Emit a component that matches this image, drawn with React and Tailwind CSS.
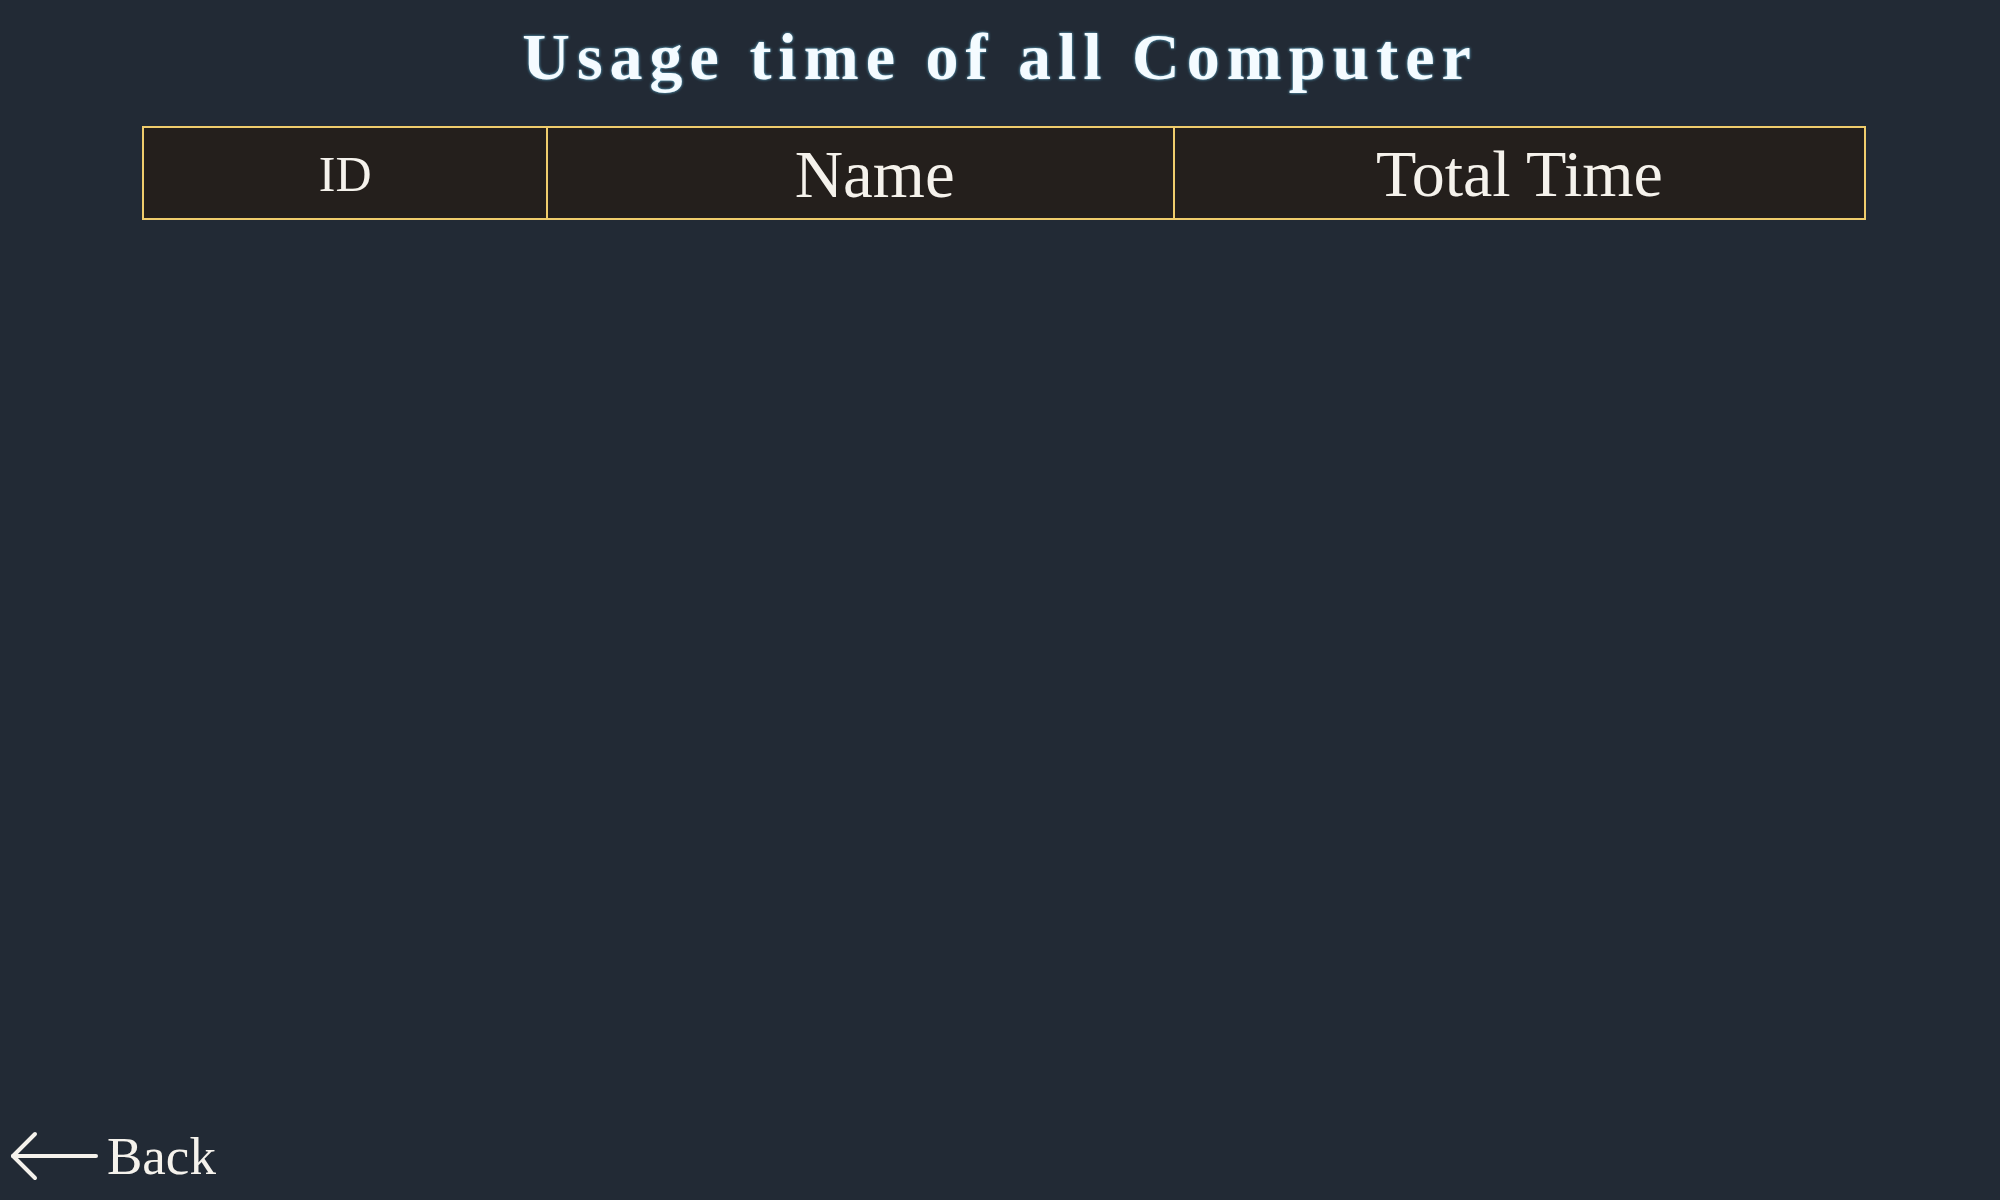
import React from 'react';

const columns = [
  { label: 'ID', width: 'w-[405px]', size: 'text-[50px]', pad: '' },
  { label: 'Name', width: 'w-[627px]', size: 'text-[67px]', pad: 'pl-[28px]' },
  { label: 'Total Time', width: 'w-[692px]', size: 'text-[66px]', pad: '' },
];

const BackArrow = () => (
  <svg width="90" height="50" viewBox="0 0 90 50" fill="none" stroke="#f5f2ec" strokeWidth="4" strokeLinecap="round" strokeLinejoin="round">
    <line x1="5" y1="25" x2="88" y2="25" />
    <polyline points="27,3 5,25 27,47" />
  </svg>
);

const App = () => {
  return (
    <div className="h-screen bg-[#222a35] flex flex-col font-['Liberation_Serif',serif]">
      <h1 className="pt-[17px] text-center text-[66px] leading-[80px] font-bold tracking-[7px] text-[#f4fbff] [text-shadow:0_0_3px_#6cc4e6]">
        Usage time of all Computer
      </h1>

      <table className="mt-[29px] ml-[142px] w-[1724px] border-collapse">
        <thead>
          <tr className="bg-[#241f1c]">
            {columns.map(col => (
              <th
                key={col.label}
                className={`${col.width} ${col.size} ${col.pad} h-[92px] pt-[2px] leading-none border-2 border-[#efcc6c] font-normal text-[#f5f2ec] text-center`}
              >
                {col.label}
              </th>
            ))}
          </tr>
        </thead>
        <tbody></tbody>
      </table>

      <button className="mt-auto mb-[14px] ml-[8px] flex items-center gap-[9px] text-[53px] leading-[60px] text-[#f5f2ec] self-start">
        <BackArrow />
        <span>Back</span>
      </button>
    </div>
  );
};

export default App;
